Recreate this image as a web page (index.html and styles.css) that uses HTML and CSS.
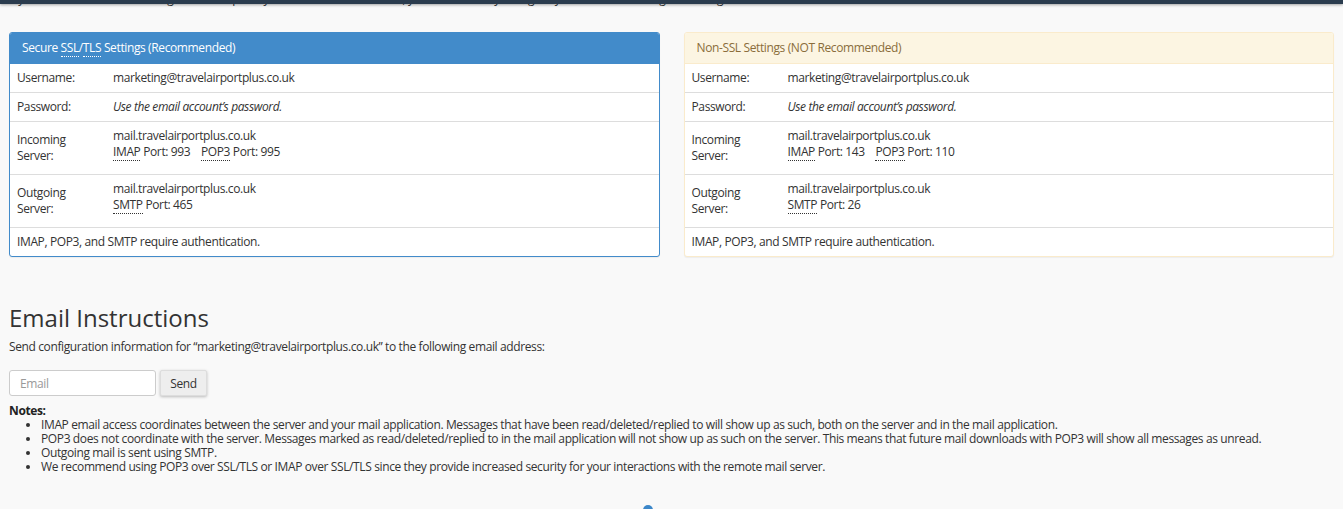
FILE: index.html
```html
<!DOCTYPE html>
<html>
<head>
<meta charset="utf-8">
<link rel="stylesheet" href="styles.css">
</head>
<body>
<div class="topbar"></div>
<div class="page">
  <p class="intro">If you do not see an auto-configuration script for your client in the list above, you can manually configure your mail client using the settings below:</p>
  <div class="panels">
    <div class="panel panel-primary">
      <div class="panel-heading">Secure <abbr>SSL</abbr>/<abbr>TLS</abbr> Settings (Recommended)</div>
      <div class="row">
        <div class="label">Username:</div>
        <div class="value">marketing@travelairportplus.co.uk</div>
      </div>
      <div class="row">
        <div class="label">Password:</div>
        <div class="value"><em>Use the email account’s password.</em></div>
      </div>
      <div class="row tall">
        <div class="label">Incoming<br>Server:</div>
        <div class="value">mail.travelairportplus.co.uk<br><abbr>IMAP</abbr> Port: 993 <span class="sp"></span><abbr>POP3</abbr> Port: 995</div>
      </div>
      <div class="row tall">
        <div class="label">Outgoing<br>Server:</div>
        <div class="value">mail.travelairportplus.co.uk<br><abbr>SMTP</abbr> Port: 465</div>
      </div>
      <div class="row foot">IMAP, POP3, and SMTP require authentication.</div>
    </div>
    <div class="panel panel-warning">
      <div class="panel-heading">Non-SSL Settings (NOT Recommended)</div>
      <div class="row">
        <div class="label">Username:</div>
        <div class="value">marketing@travelairportplus.co.uk</div>
      </div>
      <div class="row">
        <div class="label">Password:</div>
        <div class="value"><em>Use the email account’s password.</em></div>
      </div>
      <div class="row tall">
        <div class="label">Incoming<br>Server:</div>
        <div class="value">mail.travelairportplus.co.uk<br><abbr>IMAP</abbr> Port: 143 <span class="sp"></span><abbr>POP3</abbr> Port: 110</div>
      </div>
      <div class="row tall">
        <div class="label">Outgoing<br>Server:</div>
        <div class="value">mail.travelairportplus.co.uk<br><abbr>SMTP</abbr> Port: 26</div>
      </div>
      <div class="row foot">IMAP, POP3, and SMTP require authentication.</div>
    </div>
  </div>

  <h2 class="title">Email Instructions</h2>
  <p class="desc">Send configuration information for “marketing@travelairportplus.co.uk” to the following email address:</p>
  <form class="sendform">
    <input class="email" type="text" placeholder="Email">
    <button class="btn" type="button">Send</button>
  </form>
  <div class="notes">
    <strong>Notes:</strong>
    <ul>
      <li>IMAP email access coordinates between the server and your mail application. Messages that have been read/deleted/replied to will show up as such, both on the server and in the mail application.</li>
      <li>POP3 does not coordinate with the server. Messages marked as read/deleted/replied to in the mail application will not show up as such on the server. This means that future mail downloads with POP3 will show all messages as unread.</li>
      <li>Outgoing mail is sent using SMTP.</li>
      <li>We recommend using POP3 over SSL/TLS or IMAP over SSL/TLS since they provide increased security for your interactions with the remote mail server.</li>
    </ul>
  </div>
  <div class="spinner-wrap"><span class="spinner"></span></div>
</div>
</body>
</html>
```
FILE: styles.css
```css
html, body {
  margin: 0;
  padding: 0;
  background: #f9f9f9;
  font-family: "Open Sans", "Liberation Sans", sans-serif;
  font-size: 12px;
  letter-spacing: -0.38px;
  color: #333;
  overflow: hidden;
}
.topbar {
  position: fixed;
  top: 0;
  left: 0;
  right: 0;
  height: 4px;
  background: #2b3c4e;
  box-shadow: 0 1px 3px rgba(0,0,0,0.35);
  z-index: 10;
}
.page {
  padding: 0 9px;
}
.intro {
  margin: -9px 0 0 0;
  line-height: 16px;
  height: 16px;
  white-space: nowrap;
}
.panels {
  display: grid;
  grid-template-columns: 1fr 1fr;
  column-gap: 24px;
  margin-top: 25px;
}
.panel {
  background: #fff;
  border: 1px solid #ddd;
  border-radius: 3px;
  box-shadow: 0 1px 1px rgba(0,0,0,0.05);
}
.panel-primary { border-color: #428bca; }
.panel-warning { border-color: #faebcc; }
.panel-heading {
  padding: 7px 12px 7px 12px;
  line-height: 16px;
  border-bottom: 1px solid transparent;
  border-radius: 2px 2px 0 0;
}
.panel-primary .panel-heading {
  background: #428bca;
  color: #fff;
  border-bottom-color: #428bca;
}
.panel-warning .panel-heading {
  background: #fcf5e2;
  color: #8a6d3b;
  border-bottom-color: #faebcc;
}
abbr {
  text-decoration: none;
  border-bottom: 1px dotted currentColor;
}
.row {
  display: flex;
  align-items: center;
  padding: 6px 7px;
  line-height: 16px;
  border-top: 1px solid #ddd;
}
.panel-heading + .row { border-top: none; }
.label {
  width: 96px;
  flex: none;
}
.row.tall .value {
  padding-bottom: 8px;
}
.sp {
  display: inline-block;
  width: 8px;
}
.title {
  font-size: 24px;
  font-weight: 400;
  letter-spacing: 0;
  line-height: 26px;
  margin: 48px 0 8px 0;
  color: #333;
}
.desc {
  margin: 0 0 15px 0;
  line-height: 16px;
}
.sendform {
  display: flex;
  gap: 4px;
  margin: 0;
}
.email {
  width: 147px;
  height: 26px;
  box-sizing: border-box;
  border: 1px solid #ccc;
  border-radius: 3px;
  padding: 4px 10px;
  font-family: inherit;
  font-size: 12px;
  letter-spacing: -0.38px;
  background: #fff;
  color: #555;
  outline: none;
}
.email::placeholder { color: #999; }
.btn {
  height: 26px;
  width: 47px;
  box-sizing: border-box;
  border: 1px solid #ddd;
  border-radius: 2px;
  background: #eee;
  color: #333;
  font-family: inherit;
  font-size: 12px;
  letter-spacing: -0.38px;
  padding: 0;
  box-shadow: 0 1px 3px rgba(0,0,0,0.25);
}
.notes {
  margin-top: 8px;
  line-height: 14px;
}
.notes strong {
  display: block;
  font-weight: 700;
  color: #222;
}
.notes ul {
  margin: 0;
  padding-left: 32px;
}
.spinner-wrap {
  display: flex;
  margin-top: 31px;
  padding-left: 634px;
}
.spinner {
  width: 10px;
  height: 10px;
  border-radius: 50%;
  background: #3c87c9;
}
```
